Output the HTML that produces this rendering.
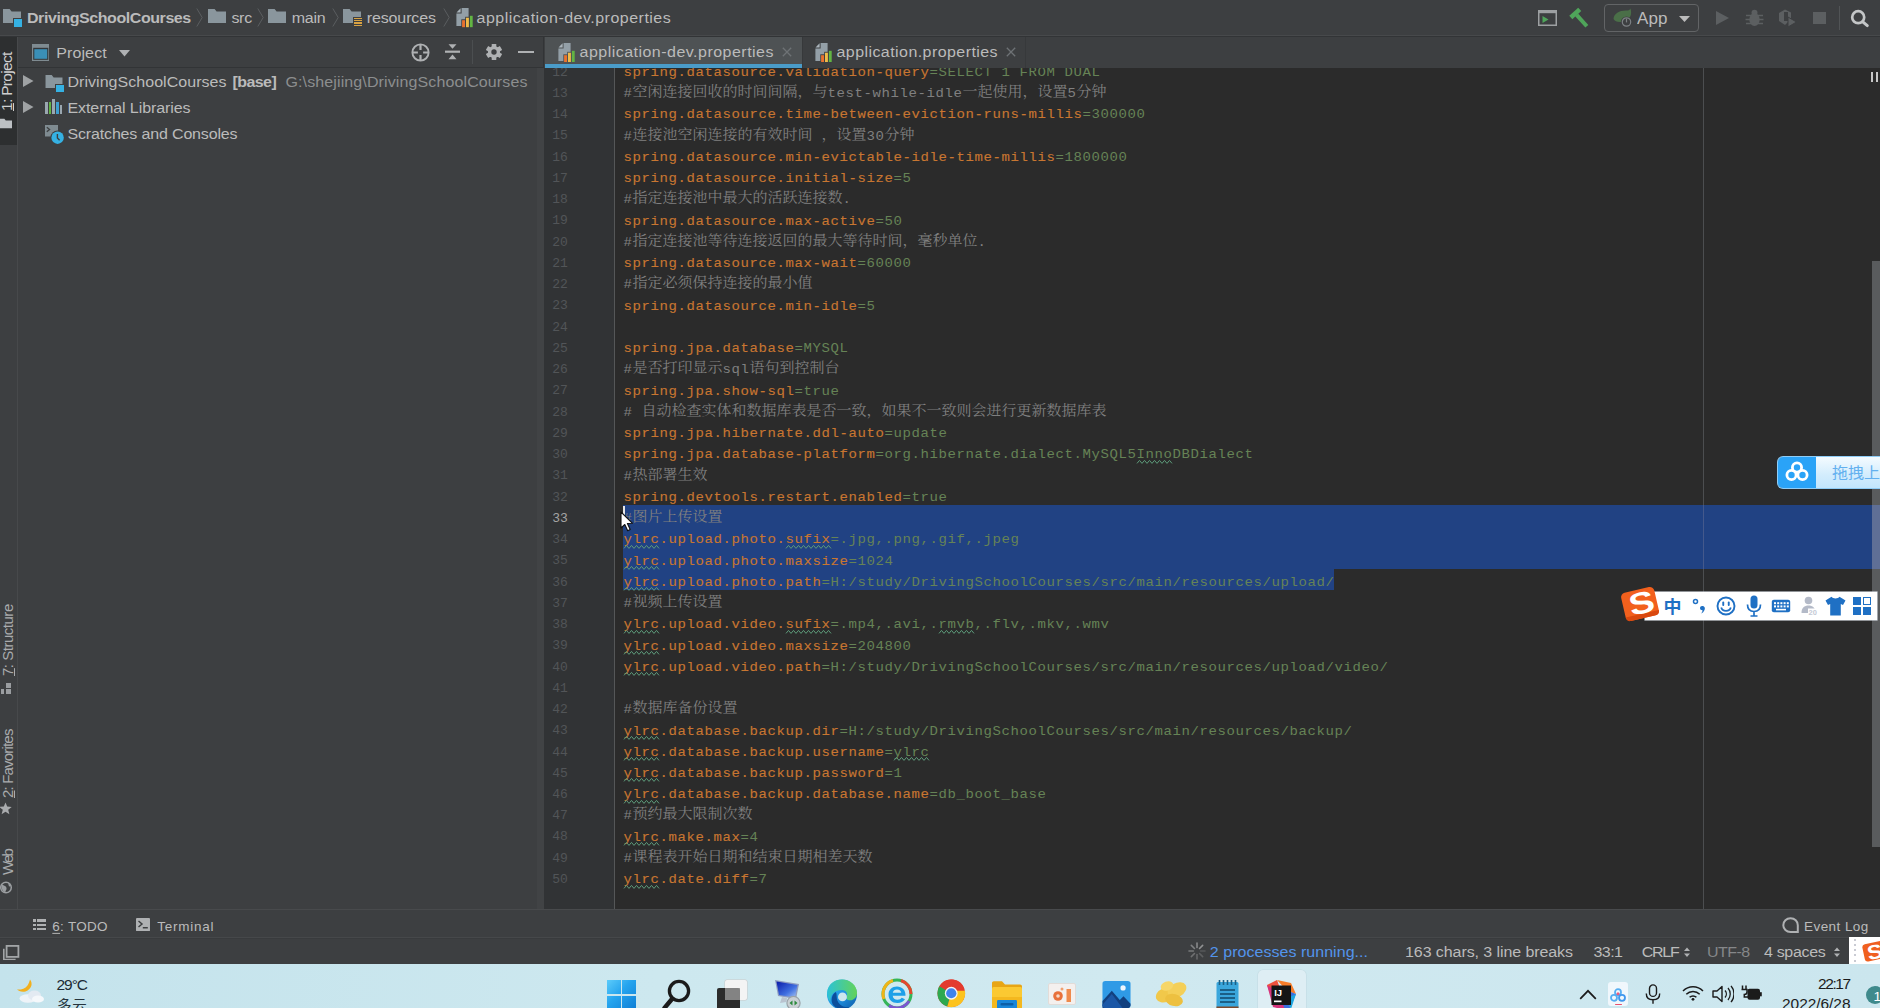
<!DOCTYPE html>
<html lang="zh"><head><meta charset="utf-8"><title>DrivingSchoolCourses</title><style>
html,body{margin:0;padding:0;background:#3d3f41;overflow:hidden}
#root{position:relative;width:1880px;height:1008px;overflow:hidden;background:#3d3f41}
.t{position:absolute;white-space:pre;display:block}
.r{position:absolute;display:block}
.k{color:#c87631;-webkit-text-stroke:.12px #c87631}
.v{color:#668356}
.c{color:#808080}
.z{font-size:15px;letter-spacing:0;line-height:0;position:relative;top:-0.8px}

</style></head><body><div id="root">
<div class="r" style="left:0px;top:0px;width:1880px;height:36px;background:#3d3f41;"></div>
<div class="r" style="left:0px;top:35px;width:1880px;height:1px;background:#47494b;"></div>
<div class="r" style="left:0px;top:36px;width:1880px;height:1.3px;background:#323436;"></div>
<svg class="r" style="left:3px;top:8.5px;" width="18" height="14" viewBox="0 0 18 14"><path d="M0,0 H6.6 L8.6,2.6 H18 V14 H0 Z" fill="#8a969d"/></svg>
<div class="r" style="left:13px;top:18px;width:9.5px;height:9.5px;background:#3d3f41;"></div>
<div class="r" style="left:14.2px;top:19.2px;width:8px;height:8px;background:#35b1e3;"></div>
<span id="t1" class="t" style="left:27.00px;top:9.66px;font:bold 16px/16px 'Liberation Sans','Noto Sans CJK SC',sans-serif;color:#bbbbbb;letter-spacing:-0.435px;transform:scaleY(0.930);transform-origin:0 13.54px;">DrivingSchoolCourses</span>
<svg class="r" style="left:196px;top:8px;" width="7" height="19" viewBox="0 0 7 19"><path d="M0.8,0.5 L6.2,9.5 L0.8,18.5" fill="none" stroke="#5b5e60" stroke-width="1"/></svg>
<svg class="r" style="left:208px;top:9.3px;" width="18" height="14" viewBox="0 0 18 14"><path d="M0,0 H6.6 L8.6,2.6 H18 V14 H0 Z" fill="#8a969d"/></svg>
<span id="t2" class="t" style="left:231.40px;top:9.66px;font:normal 16px/16px 'Liberation Sans','Noto Sans CJK SC',sans-serif;color:#bbbbbb;letter-spacing:-0.291px;transform:scaleY(0.930);transform-origin:0 13.54px;">src</span>
<svg class="r" style="left:257.4px;top:8px;" width="7" height="19" viewBox="0 0 7 19"><path d="M0.8,0.5 L6.2,9.5 L0.8,18.5" fill="none" stroke="#5b5e60" stroke-width="1"/></svg>
<svg class="r" style="left:268px;top:9.3px;" width="18" height="14" viewBox="0 0 18 14"><path d="M0,0 H6.6 L8.6,2.6 H18 V14 H0 Z" fill="#8a969d"/></svg>
<span id="t3" class="t" style="left:291.70px;top:9.66px;font:normal 16px/16px 'Liberation Sans','Noto Sans CJK SC',sans-serif;color:#bbbbbb;letter-spacing:-0.254px;transform:scaleY(0.930);transform-origin:0 13.54px;">main</span>
<svg class="r" style="left:331.6px;top:8px;" width="7" height="19" viewBox="0 0 7 19"><path d="M0.8,0.5 L6.2,9.5 L0.8,18.5" fill="none" stroke="#5b5e60" stroke-width="1"/></svg>
<svg class="r" style="left:342.8px;top:9.3px;" width="18" height="14" viewBox="0 0 18 14"><path d="M0,0 H6.6 L8.6,2.6 H18 V14 H0 Z" fill="#8a969d"/></svg>
<div class="r" style="left:353px;top:16.5px;width:9.5px;height:10.5px;background:#3d3f41;"></div>
<div class="r" style="left:354.2px;top:17.6px;width:8px;height:1.3px;background:#d9a343;"></div>
<div class="r" style="left:354.2px;top:20px;width:8px;height:1.3px;background:#d9a343;"></div>
<div class="r" style="left:354.2px;top:22.4px;width:8px;height:1.3px;background:#d9a343;"></div>
<div class="r" style="left:354.2px;top:24.8px;width:8px;height:1.3px;background:#d9a343;"></div>
<span id="t4" class="t" style="left:366.70px;top:9.66px;font:normal 16px/16px 'Liberation Sans','Noto Sans CJK SC',sans-serif;color:#bbbbbb;letter-spacing:-0.112px;transform:scaleY(0.930);transform-origin:0 13.54px;">resources</span>
<svg class="r" style="left:442.5px;top:8px;" width="7" height="19" viewBox="0 0 7 19"><path d="M0.8,0.5 L6.2,9.5 L0.8,18.5" fill="none" stroke="#5b5e60" stroke-width="1"/></svg>
<svg class="r" style="left:455.5px;top:8px;" width="17" height="19.5" viewBox="0 0 17 19.5"><path d="M5.6,0 H12.6 V18 H0.4 V5.4 H5.6 Z" fill="#939fa7"/><path d="M4.6,0.3 V4.4 H0.5 Z" fill="#aab4bb"/><rect x="5.3" y="11.3" width="12" height="8.2" fill="#3d3f41"/><rect x="9.2" y="8.8" width="8" height="4" fill="#3d3f41"/><rect x="13.2" y="7" width="3.9" height="4" fill="#3d3f41"/><rect x="6.1" y="12.2" width="2.9" height="7" fill="#e8722f"/><rect x="10" y="9.7" width="2.9" height="9.500" fill="#f0bb4a"/><rect x="13.9" y="7.8" width="2.8" height="11.400" fill="#62b543"/></svg>
<span id="t5" class="t" style="left:476.50px;top:9.66px;font:normal 16px/16px 'Liberation Sans','Noto Sans CJK SC',sans-serif;color:#bbbbbb;letter-spacing:0.489px;transform:scaleY(0.930);transform-origin:0 13.54px;">application-dev.properties</span>
<svg class="r" style="left:1537.5px;top:9.5px;" width="19" height="16" viewBox="0 0 19 16"><rect x="0.75" y="0.75" width="17.5" height="14.5" fill="none" stroke="#9da0a2" stroke-width="1.5"/><rect x="0" y="0" width="19" height="3.2" fill="#9da0a2"/><path d="M4.5,6 L10.5,9.5 L4.5,13 Z" fill="#4fa55a"/></svg>
<svg class="r" style="left:1567px;top:6px;" width="24" height="22" viewBox="0 0 24 22"><g transform="translate(9.6,8.9) rotate(-42)"><rect x="-6" y="-4.3" width="12" height="4.6" fill="#4fa55a"/><rect x="-2" y="0" width="4" height="15.3" fill="#4fa55a"/></g></svg>
<div class="r" style="left:1604px;top:4px;width:92.5px;height:26px;border:1px solid #626466;border-radius:4px"></div>
<svg class="r" style="left:1612px;top:8px;" width="22" height="20" viewBox="0 0 22 20"><path d="M1.5,11 C2,5 8,2 15.5,2.5 C17.5,2.6 18,0.8 18.4,0.4 C20.5,6 18,12 12,13.5 C7,14.6 3,14 1.5,11 Z" fill="#4a6f48"/><circle cx="14.5" cy="14" r="5.6" fill="#3d3f41"/><circle cx="14.5" cy="14" r="4.2" fill="none" stroke="#7d8184" stroke-width="1.2"/><rect x="13.9" y="10.6" width="1.2" height="3.8" fill="#7d8184"/></svg>
<span id="t6" class="t" style="left:1637.00px;top:10.11px;font:normal 17px/17px 'Liberation Sans','Noto Sans CJK SC',sans-serif;color:#bbbbbb;letter-spacing:0.095px;transform:scaleY(0.930);transform-origin:0 14.39px;">App</span>
<svg class="r" style="left:1678.5px;top:15.5px;" width="11" height="6" viewBox="0 0 11 6"><path d="M0,0 H11 L5.5,6 Z" fill="#bbbbbb"/></svg>
<svg class="r" style="left:1715.5px;top:11px;" width="13" height="14" viewBox="0 0 13 14"><path d="M0,0 L13,7 L0,14 Z" fill="#5c5f61"/></svg>
<svg class="r" style="left:1745px;top:9px;" width="19" height="18" viewBox="0 0 19 18"><ellipse cx="9.5" cy="10.5" rx="5.2" ry="6.5" fill="#5c5f61"/><circle cx="9.5" cy="3.8" r="3" fill="#5c5f61"/><g stroke="#5c5f61" stroke-width="1.6"><path d="M1,6.5 H18 M0.5,10.5 H18.5 M1,14.5 H18"/></g></svg>
<svg class="r" style="left:1777px;top:9px;" width="20" height="18" viewBox="0 0 20 18"><path d="M8,0.5 L14,3.5 V10 L8,16 L2,12 V4 Z" fill="#5c5f61"/><path d="M7,3 h4 v9 h-4z" fill="#3d3f41"/><path d="M11,8 L19.5,13 L11,18 Z" fill="#5c5f61" stroke="#3d3f41" stroke-width="1"/></svg>
<div class="r" style="left:1812.5px;top:12.3px;width:13px;height:12px;background:#5c5f61;"></div>
<div class="r" style="left:1839px;top:6px;width:1px;height:24px;background:#515456;"></div>
<svg class="r" style="left:1850px;top:9px;" width="21" height="20" viewBox="0 0 21 20"><circle cx="8.2" cy="8.2" r="6" fill="none" stroke="#c4c6c7" stroke-width="2.7"/><path d="M12.8,12.8 L17.3,16.6" stroke="#c4c6c7" stroke-width="3" stroke-linecap="round"/></svg>
<div class="r" style="left:0px;top:37px;width:17px;height:872px;background:#3d3f41;"></div>
<div class="r" style="left:17px;top:37.3px;width:1px;height:872px;background:#47494b;"></div>
<div class="r" style="left:0px;top:37px;width:17px;height:107.5px;background:#2d2f30;"></div>
<span class="t" style="left:6.5px;top:110.5px;width:0;height:0;transform:rotate(-90deg);transform-origin:0 0"><span id="t7" class="t" style="left:0;top:-7.75px;font:15.5px/15.5px 'Liberation Sans','Noto Sans CJK SC',sans-serif;color:#d0d0d0;letter-spacing:-0.683px"><u style="text-underline-offset:1px">1</u>: Project</span></span>
<svg class="r" style="left:-0.5px;top:118px;" width="12" height="11" viewBox="0 0 18 14"><path d="M0,0 H6.6 L8.6,2.6 H18 V14 H0 Z" fill="#bcc0c3"/></svg>
<span class="t" style="left:6.6px;top:675.5px;width:0;height:0;transform:rotate(-90deg);transform-origin:0 0"><span id="t8" class="t" style="left:0;top:-7.5px;font:15px/15px 'Liberation Sans','Noto Sans CJK SC',sans-serif;color:#a9abad;letter-spacing:-0.483px"><u style="text-underline-offset:1px">7</u>: Structure</span></span>
<div class="r" style="left:0.5px;top:689px;width:3.5px;height:5px;background:#9a9da0;"></div>
<div class="r" style="left:5.5px;top:689px;width:5px;height:5px;background:#9a9da0;"></div>
<div class="r" style="left:5.5px;top:683px;width:5px;height:5px;background:#9a9da0;"></div>
<span class="t" style="left:6.6px;top:798px;width:0;height:0;transform:rotate(-90deg);transform-origin:0 0"><span id="t9" class="t" style="left:0;top:-7.5px;font:15px/15px 'Liberation Sans','Noto Sans CJK SC',sans-serif;color:#a9abad;letter-spacing:-0.815px"><u style="text-underline-offset:1px">2</u>: Favorites</span></span>
<svg class="r" style="left:0px;top:802px;" width="12" height="13" viewBox="0 0 12 13"><path d="M5.5,0.5 L7.2,4.6 L11.7,4.9 L8.2,7.8 L9.4,12.2 L5.5,9.8 L1.6,12.2 L2.8,7.8 L-0.7,4.9 L3.8,4.6 Z" fill="#a9abad"/></svg>
<span class="t" style="left:6.6px;top:874.5px;width:0;height:0;transform:rotate(-90deg);transform-origin:0 0"><span id="t10" class="t" style="left:0;top:-7.5px;font:15px/15px 'Liberation Sans','Noto Sans CJK SC',sans-serif;color:#a9abad;letter-spacing:-1.831px">Web</span></span>
<svg class="r" style="left:0px;top:881px;" width="13" height="13" viewBox="0 0 13 13"><circle cx="6" cy="6.5" r="5.3" fill="none" stroke="#9a9da0" stroke-width="1.5"/><path d="M2,3.5 C4,5 6,4.5 6.5,7 C7,9 5,9.5 5.5,11.5 L3.5,10.5 C1.5,8.5 1,5.5 2,3.5 Z M8,1.8 C9,3 10.5,3 11,5 L9,5.5 Z" fill="#9a9da0"/></svg>
<div class="r" style="left:18px;top:37px;width:525px;height:872px;background:#3d3f41;"></div>
<div class="r" style="left:18px;top:67px;width:525px;height:1px;background:#323436;"></div>
<div class="r" style="left:537px;top:68px;width:6.5px;height:841px;background:#414345;"></div>
<svg class="r" style="left:31.5px;top:44px;" width="17.5" height="17" viewBox="0 0 17.5 17"><rect x="0.6" y="0.6" width="16.3" height="15.8" fill="#33373a" stroke="#7f8b91" stroke-width="1.2"/><rect x="0" y="0" width="17.5" height="3.8" fill="#7f8b91"/><rect x="2.3" y="5.2" width="12.9" height="9.6" fill="#3a8fb7"/></svg>
<span id="t11" class="t" style="left:56.20px;top:44.96px;font:normal 16px/16px 'Liberation Sans','Noto Sans CJK SC',sans-serif;color:#bbbbbb;letter-spacing:0.121px;transform:scaleY(0.930);transform-origin:0 13.54px;">Project</span>
<svg class="r" style="left:118.7px;top:50px;" width="11" height="6.5" viewBox="0 0 11 6.5"><path d="M0,0 H11 L5.5,6.5 Z" fill="#afb1b3"/></svg>
<svg class="r" style="left:410.5px;top:42.5px;" width="19" height="19" viewBox="0 0 19 19"><circle cx="9.5" cy="9.5" r="8.1" fill="none" stroke="#afb1b3" stroke-width="1.9"/><path d="M9.5,1.4 V6.9 M9.5,12.1 V17.600 M1.4,9.5 H6.9 M12.1,9.5 H17.600" stroke="#afb1b3" stroke-width="2.2"/></svg>
<svg class="r" style="left:443.5px;top:43.3px;" width="17" height="17.4" viewBox="0 0 17 17.4"><path d="M1,8.7 H16" stroke="#afb1b3" stroke-width="2.2"/><path d="M4.5,1.2 H12.5 L8.5,5.800 Z M4.5,16.2 H12.5 L8.5,11.600 Z" fill="#afb1b3"/></svg>
<div class="r" style="left:471.8px;top:40px;width:1px;height:24px;background:#4b4e50;"></div>
<svg class="r" style="left:484.7px;top:43px;" width="18" height="18" viewBox="0 0 18 18"><g fill="#afb1b3"><circle cx="9" cy="9" r="6.1"/><rect x="6.7" y="0.9" width="4.6" height="16.2" rx="0.5"/><rect x="6.7" y="0.9" width="4.6" height="16.2" rx="0.5" transform="rotate(60 9 9)"/><rect x="6.7" y="0.9" width="4.6" height="16.2" rx="0.5" transform="rotate(120 9 9)"/></g><circle cx="9" cy="9" r="2.7" fill="#3d3f41"/></svg>
<div class="r" style="left:518.3px;top:50.8px;width:15.5px;height:2.4px;background:#afb1b3;"></div>
<svg class="r" style="left:23px;top:75px;" width="11" height="12" viewBox="0 0 11 12"><path d="M0,0 L10.5,6 L0,12 Z" fill="#9fa2a4"/></svg>
<svg class="r" style="left:45px;top:74.6px;" width="18" height="13.2" viewBox="0 0 18 14"><path d="M0,0 H6.6 L8.6,2.6 H18 V14 H0 Z" fill="#8a969d"/></svg>
<div class="r" style="left:55.2px;top:83.5px;width:9.6px;height:9.2px;background:#3d3f41;"></div>
<div class="r" style="left:56.2px;top:84.5px;width:7.6px;height:7.2px;background:#35b1e3;"></div>
<span id="t12" class="t" style="left:67.50px;top:73.96px;font:normal 16px/16px 'Liberation Sans','Noto Sans CJK SC',sans-serif;color:#bbbbbb;letter-spacing:0.036px;transform:scaleY(0.930);transform-origin:0 13.54px;">DrivingSchoolCourses</span>
<span id="t13" class="t" style="left:232.50px;top:73.96px;font:bold 16px/16px 'Liberation Sans','Noto Sans CJK SC',sans-serif;color:#bbbbbb;letter-spacing:-0.571px;transform:scaleY(0.930);transform-origin:0 13.54px;">[base]</span>
<span id="t14" class="t" style="left:285.50px;top:73.96px;font:normal 16px/16px 'Liberation Sans','Noto Sans CJK SC',sans-serif;color:#8c8e8f;letter-spacing:0.116px;transform:scaleY(0.930);transform-origin:0 13.54px;">G:\shejiing\DrivingSchoolCourses</span>
<svg class="r" style="left:23px;top:101px;" width="11" height="12" viewBox="0 0 11 12"><path d="M0,0 L10.5,6 L0,12 Z" fill="#9fa2a4"/></svg>
<div class="r" style="left:45px;top:102.3px;width:2.8px;height:12px;background:#9aa7b0;"></div>
<div class="r" style="left:48.65px;top:102.3px;width:2.8px;height:12px;background:#62b543;"></div>
<div class="r" style="left:52.3px;top:99.3px;width:2.8px;height:15px;background:#9aa7b0;"></div>
<div class="r" style="left:55.95px;top:102.3px;width:2.8px;height:12px;background:#3d9fd0;"></div>
<div class="r" style="left:59.6px;top:104.8px;width:2.8px;height:9.5px;background:#9aa7b0;"></div>
<span id="t15" class="t" style="left:67.50px;top:99.96px;font:normal 16px/16px 'Liberation Sans','Noto Sans CJK SC',sans-serif;color:#bbbbbb;letter-spacing:-0.086px;transform:scaleY(0.930);transform-origin:0 13.54px;">External Libraries</span>
<svg class="r" style="left:45px;top:125px;" width="20" height="21" viewBox="0 0 20 21"><path d="M0,0 H13 V11.5 H0 Z" fill="#7f8b91"/><path d="M1.8,2.2 L4.6,4.5 L1.8,6.8" fill="none" stroke="#3d3f41" stroke-width="1.3"/><circle cx="12.6" cy="12.700" r="7.200" fill="#3d3f41"/><circle cx="12.6" cy="12.700" r="6.200" fill="#35b1e3"/><path d="M12.400,9 V13 L14.600,15.200" fill="none" stroke="#3d3f41" stroke-width="1.4"/></svg>
<span id="t16" class="t" style="left:67.50px;top:125.96px;font:normal 16px/16px 'Liberation Sans','Noto Sans CJK SC',sans-serif;color:#bbbbbb;letter-spacing:-0.160px;transform:scaleY(0.930);transform-origin:0 13.54px;">Scratches and Consoles</span>
<div class="r" style="left:543.5px;top:37px;width:1337px;height:31px;background:#3d3f41;"></div>
<div class="r" style="left:543.5px;top:67.5px;width:1337px;height:1px;background:#323436;"></div>
<div class="r" style="left:543px;top:37px;width:1px;height:31px;background:#323436;"></div>
<div class="r" style="left:545px;top:37px;width:256.5px;height:27px;background:#4e5254;"></div>
<div class="r" style="left:545px;top:63.7px;width:256.5px;height:4.3px;background:#4a9cc9;"></div>
<div class="r" style="left:801.5px;top:37px;width:1px;height:31px;background:#37393b;"></div>
<div class="r" style="left:1024.5px;top:37px;width:1px;height:31px;background:#37393b;"></div>
<svg class="r" style="left:558px;top:42.5px;" width="17" height="19.5" viewBox="0 0 17 19.5"><path d="M5.6,0 H12.6 V18 H0.4 V5.4 H5.6 Z" fill="#939fa7"/><path d="M4.6,0.3 V4.4 H0.5 Z" fill="#aab4bb"/><rect x="5.3" y="11.3" width="12" height="8.2" fill="#4e5254"/><rect x="9.2" y="8.8" width="8" height="4" fill="#4e5254"/><rect x="13.2" y="7" width="3.9" height="4" fill="#4e5254"/><rect x="6.1" y="12.2" width="2.9" height="7" fill="#e8722f"/><rect x="10" y="9.7" width="2.9" height="9.500" fill="#f0bb4a"/><rect x="13.9" y="7.8" width="2.8" height="11.400" fill="#62b543"/></svg>
<span id="t17" class="t" style="left:579.50px;top:44.46px;font:normal 16px/16px 'Liberation Sans','Noto Sans CJK SC',sans-serif;color:#bbbbbb;letter-spacing:0.477px;transform:scaleY(0.930);transform-origin:0 13.54px;">application-dev.properties</span>
<svg class="r" style="left:781.5px;top:47px;" width="10" height="10" viewBox="0 0 10 10"><path d="M0.8,0.8 L9.2,9.2 M9.2,0.8 L0.8,9.2" stroke="#6e7275" stroke-width="1.3"/></svg>
<svg class="r" style="left:815px;top:42.5px;" width="17" height="19.5" viewBox="0 0 17 19.5"><path d="M5.6,0 H12.6 V18 H0.4 V5.4 H5.6 Z" fill="#939fa7"/><path d="M4.6,0.3 V4.4 H0.5 Z" fill="#aab4bb"/><rect x="5.3" y="11.3" width="12" height="8.2" fill="#3d3f41"/><rect x="9.2" y="8.8" width="8" height="4" fill="#3d3f41"/><rect x="13.2" y="7" width="3.9" height="4" fill="#3d3f41"/><rect x="6.1" y="12.2" width="2.9" height="7" fill="#e8722f"/><rect x="10" y="9.7" width="2.9" height="9.500" fill="#f0bb4a"/><rect x="13.9" y="7.8" width="2.8" height="11.400" fill="#62b543"/></svg>
<span id="t18" class="t" style="left:836.50px;top:44.46px;font:normal 16px/16px 'Liberation Sans','Noto Sans CJK SC',sans-serif;color:#bbbbbb;letter-spacing:0.428px;transform:scaleY(0.930);transform-origin:0 13.54px;">application.properties</span>
<svg class="r" style="left:1005.5px;top:47px;" width="10" height="10" viewBox="0 0 10 10"><path d="M0.8,0.8 L9.2,9.2 M9.2,0.8 L0.8,9.2" stroke="#6e7275" stroke-width="1.3"/></svg>
<div class="r" style="left:545px;top:68px;width:1335px;height:841px;background:#2b2b2b;"></div>
<div class="r" style="left:543.5px;top:68px;width:70.5px;height:841px;background:#313335;"></div>
<div class="r" style="left:614px;top:68px;width:1px;height:841px;background:#555758;"></div>
<div class="r" style="left:1703px;top:68px;width:1px;height:841px;background:#4c4e50;"></div>
<div class="r" style="left:623px;top:505.3px;width:1257px;height:64.029px;background:#214283;"></div>
<div class="r" style="left:623px;top:569.029px;width:711px;height:21.243px;background:#214283;"></div>
<div class="r" style="left:1703px;top:505.3px;width:1px;height:63.729px;background:#44598c;"></div>
<div class="r" style="left:1872px;top:261px;width:8px;height:586px;background:#595b5d;"></div>
<div class="r" style="left:1872px;top:505.3px;width:8px;height:63.729px;background:#5f6f96;"></div>
<div class="r" style="left:1871.3px;top:71.5px;width:2.2px;height:10px;background:#c8c8c8;"></div>
<div class="r" style="left:1875.6px;top:71.5px;width:2.2px;height:10px;background:#c8c8c8;"></div>
<div class="r" style="left:545px;top:68px;width:1335px;height:841px;overflow:hidden">
<span id="t19" class="t" style="left:7.30px;top:-2.27px;font:normal 13px/13px 'Liberation Mono','Noto Serif CJK SC',monospace;color:#525558;letter-spacing:0.000px;transform:scaleY(0.920);transform-origin:0 9.96px;">12</span>
<span id="t20" class="t" style="left:78.40px;top:-3.03px;font:normal 14px/14px 'Liberation Mono','Noto Serif CJK SC',monospace;color:#a9b7c6;letter-spacing:0.000px;transform:scaleY(0.900);transform-origin:0 10.73px;letter-spacing:0.6px;"><span class="k">spring.datasource.validation-query</span><span class="v">=SELECT 1 FROM DUAL</span></span>
<span id="t21" class="t" style="left:7.30px;top:18.98px;font:normal 13px/13px 'Liberation Mono','Noto Serif CJK SC',monospace;color:#525558;letter-spacing:0.000px;transform:scaleY(0.920);transform-origin:0 9.96px;">13</span>
<span id="t22" class="t" style="left:78.40px;top:18.21px;font:normal 14px/14px 'Liberation Mono','Noto Serif CJK SC',monospace;color:#a9b7c6;letter-spacing:0.000px;transform:scaleY(0.900);transform-origin:0 10.73px;letter-spacing:0.6px;"><span class="c">#<span class="z">空闲连接回收的时间间隔，与</span>test-while-idle<span class="z">一起使用，设置</span>5<span class="z">分钟</span></span></span>
<span id="t23" class="t" style="left:7.30px;top:40.22px;font:normal 13px/13px 'Liberation Mono','Noto Serif CJK SC',monospace;color:#525558;letter-spacing:0.000px;transform:scaleY(0.920);transform-origin:0 9.96px;">14</span>
<span id="t24" class="t" style="left:78.40px;top:39.45px;font:normal 14px/14px 'Liberation Mono','Noto Serif CJK SC',monospace;color:#a9b7c6;letter-spacing:0.000px;transform:scaleY(0.900);transform-origin:0 10.73px;letter-spacing:0.6px;"><span class="k">spring.datasource.time-between-eviction-runs-millis</span><span class="v">=300000</span></span>
<span id="t25" class="t" style="left:7.30px;top:61.46px;font:normal 13px/13px 'Liberation Mono','Noto Serif CJK SC',monospace;color:#525558;letter-spacing:0.000px;transform:scaleY(0.920);transform-origin:0 9.96px;">15</span>
<span id="t26" class="t" style="left:78.40px;top:60.70px;font:normal 14px/14px 'Liberation Mono','Noto Serif CJK SC',monospace;color:#a9b7c6;letter-spacing:0.000px;transform:scaleY(0.900);transform-origin:0 10.73px;letter-spacing:0.6px;"><span class="c">#<span class="z">连接池空闲连接的有效时间</span> <span class="z">，设置</span>30<span class="z">分钟</span></span></span>
<span id="t27" class="t" style="left:7.30px;top:82.70px;font:normal 13px/13px 'Liberation Mono','Noto Serif CJK SC',monospace;color:#525558;letter-spacing:0.000px;transform:scaleY(0.920);transform-origin:0 9.96px;">16</span>
<span id="t28" class="t" style="left:78.40px;top:81.94px;font:normal 14px/14px 'Liberation Mono','Noto Serif CJK SC',monospace;color:#a9b7c6;letter-spacing:0.000px;transform:scaleY(0.900);transform-origin:0 10.73px;letter-spacing:0.6px;"><span class="k">spring.datasource.min-evictable-idle-time-millis</span><span class="v">=1800000</span></span>
<span id="t29" class="t" style="left:7.30px;top:103.95px;font:normal 13px/13px 'Liberation Mono','Noto Serif CJK SC',monospace;color:#525558;letter-spacing:0.000px;transform:scaleY(0.920);transform-origin:0 9.96px;">17</span>
<span id="t30" class="t" style="left:78.40px;top:103.18px;font:normal 14px/14px 'Liberation Mono','Noto Serif CJK SC',monospace;color:#a9b7c6;letter-spacing:0.000px;transform:scaleY(0.900);transform-origin:0 10.73px;letter-spacing:0.6px;"><span class="k">spring.datasource.initial-size</span><span class="v">=5</span></span>
<span id="t31" class="t" style="left:7.30px;top:125.19px;font:normal 13px/13px 'Liberation Mono','Noto Serif CJK SC',monospace;color:#525558;letter-spacing:0.000px;transform:scaleY(0.920);transform-origin:0 9.96px;">18</span>
<span id="t32" class="t" style="left:78.40px;top:124.42px;font:normal 14px/14px 'Liberation Mono','Noto Serif CJK SC',monospace;color:#a9b7c6;letter-spacing:0.000px;transform:scaleY(0.900);transform-origin:0 10.73px;letter-spacing:0.6px;"><span class="c">#<span class="z">指定连接池中最大的活跃连接数</span>.</span></span>
<span id="t33" class="t" style="left:7.30px;top:146.43px;font:normal 13px/13px 'Liberation Mono','Noto Serif CJK SC',monospace;color:#525558;letter-spacing:0.000px;transform:scaleY(0.920);transform-origin:0 9.96px;">19</span>
<span id="t34" class="t" style="left:78.40px;top:145.67px;font:normal 14px/14px 'Liberation Mono','Noto Serif CJK SC',monospace;color:#a9b7c6;letter-spacing:0.000px;transform:scaleY(0.900);transform-origin:0 10.73px;letter-spacing:0.6px;"><span class="k">spring.datasource.max-active</span><span class="v">=50</span></span>
<span id="t35" class="t" style="left:7.30px;top:167.68px;font:normal 13px/13px 'Liberation Mono','Noto Serif CJK SC',monospace;color:#525558;letter-spacing:0.000px;transform:scaleY(0.920);transform-origin:0 9.96px;">20</span>
<span id="t36" class="t" style="left:78.40px;top:166.91px;font:normal 14px/14px 'Liberation Mono','Noto Serif CJK SC',monospace;color:#a9b7c6;letter-spacing:0.000px;transform:scaleY(0.900);transform-origin:0 10.73px;letter-spacing:0.6px;"><span class="c">#<span class="z">指定连接池等待连接返回的最大等待时间，毫秒单位</span>.</span></span>
<span id="t37" class="t" style="left:7.30px;top:188.92px;font:normal 13px/13px 'Liberation Mono','Noto Serif CJK SC',monospace;color:#525558;letter-spacing:0.000px;transform:scaleY(0.920);transform-origin:0 9.96px;">21</span>
<span id="t38" class="t" style="left:78.40px;top:188.15px;font:normal 14px/14px 'Liberation Mono','Noto Serif CJK SC',monospace;color:#a9b7c6;letter-spacing:0.000px;transform:scaleY(0.900);transform-origin:0 10.73px;letter-spacing:0.6px;"><span class="k">spring.datasource.max-wait</span><span class="v">=60000</span></span>
<span id="t39" class="t" style="left:7.30px;top:210.16px;font:normal 13px/13px 'Liberation Mono','Noto Serif CJK SC',monospace;color:#525558;letter-spacing:0.000px;transform:scaleY(0.920);transform-origin:0 9.96px;">22</span>
<span id="t40" class="t" style="left:78.40px;top:209.40px;font:normal 14px/14px 'Liberation Mono','Noto Serif CJK SC',monospace;color:#a9b7c6;letter-spacing:0.000px;transform:scaleY(0.900);transform-origin:0 10.73px;letter-spacing:0.6px;"><span class="c">#<span class="z">指定必须保持连接的最小值</span></span></span>
<span id="t41" class="t" style="left:7.30px;top:231.41px;font:normal 13px/13px 'Liberation Mono','Noto Serif CJK SC',monospace;color:#525558;letter-spacing:0.000px;transform:scaleY(0.920);transform-origin:0 9.96px;">23</span>
<span id="t42" class="t" style="left:78.40px;top:230.64px;font:normal 14px/14px 'Liberation Mono','Noto Serif CJK SC',monospace;color:#a9b7c6;letter-spacing:0.000px;transform:scaleY(0.900);transform-origin:0 10.73px;letter-spacing:0.6px;"><span class="k">spring.datasource.min-idle</span><span class="v">=5</span></span>
<span id="t43" class="t" style="left:7.30px;top:252.65px;font:normal 13px/13px 'Liberation Mono','Noto Serif CJK SC',monospace;color:#525558;letter-spacing:0.000px;transform:scaleY(0.920);transform-origin:0 9.96px;">24</span>
<span id="t44" class="t" style="left:7.30px;top:273.89px;font:normal 13px/13px 'Liberation Mono','Noto Serif CJK SC',monospace;color:#525558;letter-spacing:0.000px;transform:scaleY(0.920);transform-origin:0 9.96px;">25</span>
<span id="t45" class="t" style="left:78.40px;top:273.12px;font:normal 14px/14px 'Liberation Mono','Noto Serif CJK SC',monospace;color:#a9b7c6;letter-spacing:0.000px;transform:scaleY(0.900);transform-origin:0 10.73px;letter-spacing:0.6px;"><span class="k">spring.jpa.database</span><span class="v">=MYSQL</span></span>
<span id="t46" class="t" style="left:7.30px;top:295.13px;font:normal 13px/13px 'Liberation Mono','Noto Serif CJK SC',monospace;color:#525558;letter-spacing:0.000px;transform:scaleY(0.920);transform-origin:0 9.96px;">26</span>
<span id="t47" class="t" style="left:78.40px;top:294.37px;font:normal 14px/14px 'Liberation Mono','Noto Serif CJK SC',monospace;color:#a9b7c6;letter-spacing:0.000px;transform:scaleY(0.900);transform-origin:0 10.73px;letter-spacing:0.6px;"><span class="c">#<span class="z">是否打印显示</span>sql<span class="z">语句到控制台</span></span></span>
<span id="t48" class="t" style="left:7.30px;top:316.38px;font:normal 13px/13px 'Liberation Mono','Noto Serif CJK SC',monospace;color:#525558;letter-spacing:0.000px;transform:scaleY(0.920);transform-origin:0 9.96px;">27</span>
<span id="t49" class="t" style="left:78.40px;top:315.61px;font:normal 14px/14px 'Liberation Mono','Noto Serif CJK SC',monospace;color:#a9b7c6;letter-spacing:0.000px;transform:scaleY(0.900);transform-origin:0 10.73px;letter-spacing:0.6px;"><span class="k">spring.jpa.show-sql</span><span class="v">=true</span></span>
<span id="t50" class="t" style="left:7.30px;top:337.62px;font:normal 13px/13px 'Liberation Mono','Noto Serif CJK SC',monospace;color:#525558;letter-spacing:0.000px;transform:scaleY(0.920);transform-origin:0 9.96px;">28</span>
<span id="t51" class="t" style="left:78.40px;top:336.85px;font:normal 14px/14px 'Liberation Mono','Noto Serif CJK SC',monospace;color:#a9b7c6;letter-spacing:0.000px;transform:scaleY(0.900);transform-origin:0 10.73px;letter-spacing:0.6px;"><span class="c"># <span class="z">自动检查实体和数据库表是否一致，如果不一致则会进行更新数据库表</span></span></span>
<span id="t52" class="t" style="left:7.30px;top:358.86px;font:normal 13px/13px 'Liberation Mono','Noto Serif CJK SC',monospace;color:#525558;letter-spacing:0.000px;transform:scaleY(0.920);transform-origin:0 9.96px;">29</span>
<span id="t53" class="t" style="left:78.40px;top:358.10px;font:normal 14px/14px 'Liberation Mono','Noto Serif CJK SC',monospace;color:#a9b7c6;letter-spacing:0.000px;transform:scaleY(0.900);transform-origin:0 10.73px;letter-spacing:0.6px;"><span class="k">spring.jpa.hibernate.ddl-auto</span><span class="v">=update</span></span>
<span id="t54" class="t" style="left:7.30px;top:380.11px;font:normal 13px/13px 'Liberation Mono','Noto Serif CJK SC',monospace;color:#525558;letter-spacing:0.000px;transform:scaleY(0.920);transform-origin:0 9.96px;">30</span>
<span id="t55" class="t" style="left:78.40px;top:379.34px;font:normal 14px/14px 'Liberation Mono','Noto Serif CJK SC',monospace;color:#a9b7c6;letter-spacing:0.000px;transform:scaleY(0.900);transform-origin:0 10.73px;letter-spacing:0.6px;"><span class="k">spring.jpa.database-platform</span><span class="v">=org.hibernate.dialect.MySQL5InnoDBDialect</span></span>
<span id="t56" class="t" style="left:7.30px;top:401.35px;font:normal 13px/13px 'Liberation Mono','Noto Serif CJK SC',monospace;color:#525558;letter-spacing:0.000px;transform:scaleY(0.920);transform-origin:0 9.96px;">31</span>
<span id="t57" class="t" style="left:78.40px;top:400.58px;font:normal 14px/14px 'Liberation Mono','Noto Serif CJK SC',monospace;color:#a9b7c6;letter-spacing:0.000px;transform:scaleY(0.900);transform-origin:0 10.73px;letter-spacing:0.6px;"><span class="c">#<span class="z">热部署生效</span></span></span>
<span id="t58" class="t" style="left:7.30px;top:422.59px;font:normal 13px/13px 'Liberation Mono','Noto Serif CJK SC',monospace;color:#525558;letter-spacing:0.000px;transform:scaleY(0.920);transform-origin:0 9.96px;">32</span>
<span id="t59" class="t" style="left:78.40px;top:421.83px;font:normal 14px/14px 'Liberation Mono','Noto Serif CJK SC',monospace;color:#a9b7c6;letter-spacing:0.000px;transform:scaleY(0.900);transform-origin:0 10.73px;letter-spacing:0.6px;"><span class="k">spring.devtools.restart.enabled</span><span class="v">=true</span></span>
<span id="t60" class="t" style="left:7.30px;top:443.84px;font:normal 13px/13px 'Liberation Mono','Noto Serif CJK SC',monospace;color:#a4a3a3;letter-spacing:0.000px;transform:scaleY(0.920);transform-origin:0 9.96px;">33</span>
<span id="t61" class="t" style="left:78.40px;top:443.07px;font:normal 14px/14px 'Liberation Mono','Noto Serif CJK SC',monospace;color:#a9b7c6;letter-spacing:0.000px;transform:scaleY(0.900);transform-origin:0 10.73px;letter-spacing:0.6px;"><span class="c">#<span class="z">图片上传设置</span></span></span>
<span id="t62" class="t" style="left:7.30px;top:465.08px;font:normal 13px/13px 'Liberation Mono','Noto Serif CJK SC',monospace;color:#525558;letter-spacing:0.000px;transform:scaleY(0.920);transform-origin:0 9.96px;">34</span>
<span id="t63" class="t" style="left:78.40px;top:464.31px;font:normal 14px/14px 'Liberation Mono','Noto Serif CJK SC',monospace;color:#a9b7c6;letter-spacing:0.000px;transform:scaleY(0.900);transform-origin:0 10.73px;letter-spacing:0.6px;"><span class="k">ylrc.upload.photo.sufix</span><span class="v">=.jpg,.png,.gif,.jpeg</span></span>
<span id="t64" class="t" style="left:7.30px;top:486.32px;font:normal 13px/13px 'Liberation Mono','Noto Serif CJK SC',monospace;color:#525558;letter-spacing:0.000px;transform:scaleY(0.920);transform-origin:0 9.96px;">35</span>
<span id="t65" class="t" style="left:78.40px;top:485.56px;font:normal 14px/14px 'Liberation Mono','Noto Serif CJK SC',monospace;color:#a9b7c6;letter-spacing:0.000px;transform:scaleY(0.900);transform-origin:0 10.73px;letter-spacing:0.6px;"><span class="k">ylrc.upload.photo.maxsize</span><span class="v">=1024</span></span>
<span id="t66" class="t" style="left:7.30px;top:507.56px;font:normal 13px/13px 'Liberation Mono','Noto Serif CJK SC',monospace;color:#525558;letter-spacing:0.000px;transform:scaleY(0.920);transform-origin:0 9.96px;">36</span>
<span id="t67" class="t" style="left:78.40px;top:506.80px;font:normal 14px/14px 'Liberation Mono','Noto Serif CJK SC',monospace;color:#a9b7c6;letter-spacing:0.000px;transform:scaleY(0.900);transform-origin:0 10.73px;letter-spacing:0.6px;"><span class="k">ylrc.upload.photo.path</span><span class="v">=H:/study/DrivingSchoolCourses/src/main/resources/upload/</span></span>
<span id="t68" class="t" style="left:7.30px;top:528.81px;font:normal 13px/13px 'Liberation Mono','Noto Serif CJK SC',monospace;color:#525558;letter-spacing:0.000px;transform:scaleY(0.920);transform-origin:0 9.96px;">37</span>
<span id="t69" class="t" style="left:78.40px;top:528.04px;font:normal 14px/14px 'Liberation Mono','Noto Serif CJK SC',monospace;color:#a9b7c6;letter-spacing:0.000px;transform:scaleY(0.900);transform-origin:0 10.73px;letter-spacing:0.6px;"><span class="c">#<span class="z">视频上传设置</span></span></span>
<span id="t70" class="t" style="left:7.30px;top:550.05px;font:normal 13px/13px 'Liberation Mono','Noto Serif CJK SC',monospace;color:#525558;letter-spacing:0.000px;transform:scaleY(0.920);transform-origin:0 9.96px;">38</span>
<span id="t71" class="t" style="left:78.40px;top:549.28px;font:normal 14px/14px 'Liberation Mono','Noto Serif CJK SC',monospace;color:#a9b7c6;letter-spacing:0.000px;transform:scaleY(0.900);transform-origin:0 10.73px;letter-spacing:0.6px;"><span class="k">ylrc.upload.video.sufix</span><span class="v">=.mp4,.avi,.rmvb,.flv,.mkv,.wmv</span></span>
<span id="t72" class="t" style="left:7.30px;top:571.29px;font:normal 13px/13px 'Liberation Mono','Noto Serif CJK SC',monospace;color:#525558;letter-spacing:0.000px;transform:scaleY(0.920);transform-origin:0 9.96px;">39</span>
<span id="t73" class="t" style="left:78.40px;top:570.53px;font:normal 14px/14px 'Liberation Mono','Noto Serif CJK SC',monospace;color:#a9b7c6;letter-spacing:0.000px;transform:scaleY(0.900);transform-origin:0 10.73px;letter-spacing:0.6px;"><span class="k">ylrc.upload.video.maxsize</span><span class="v">=204800</span></span>
<span id="t74" class="t" style="left:7.30px;top:592.54px;font:normal 13px/13px 'Liberation Mono','Noto Serif CJK SC',monospace;color:#525558;letter-spacing:0.000px;transform:scaleY(0.920);transform-origin:0 9.96px;">40</span>
<span id="t75" class="t" style="left:78.40px;top:591.77px;font:normal 14px/14px 'Liberation Mono','Noto Serif CJK SC',monospace;color:#a9b7c6;letter-spacing:0.000px;transform:scaleY(0.900);transform-origin:0 10.73px;letter-spacing:0.6px;"><span class="k">ylrc.upload.video.path</span><span class="v">=H:/study/DrivingSchoolCourses/src/main/resources/upload/video/</span></span>
<span id="t76" class="t" style="left:7.30px;top:613.78px;font:normal 13px/13px 'Liberation Mono','Noto Serif CJK SC',monospace;color:#525558;letter-spacing:0.000px;transform:scaleY(0.920);transform-origin:0 9.96px;">41</span>
<span id="t77" class="t" style="left:7.30px;top:635.02px;font:normal 13px/13px 'Liberation Mono','Noto Serif CJK SC',monospace;color:#525558;letter-spacing:0.000px;transform:scaleY(0.920);transform-origin:0 9.96px;">42</span>
<span id="t78" class="t" style="left:78.40px;top:634.26px;font:normal 14px/14px 'Liberation Mono','Noto Serif CJK SC',monospace;color:#a9b7c6;letter-spacing:0.000px;transform:scaleY(0.900);transform-origin:0 10.73px;letter-spacing:0.6px;"><span class="c">#<span class="z">数据库备份设置</span></span></span>
<span id="t79" class="t" style="left:7.30px;top:656.27px;font:normal 13px/13px 'Liberation Mono','Noto Serif CJK SC',monospace;color:#525558;letter-spacing:0.000px;transform:scaleY(0.920);transform-origin:0 9.96px;">43</span>
<span id="t80" class="t" style="left:78.40px;top:655.50px;font:normal 14px/14px 'Liberation Mono','Noto Serif CJK SC',monospace;color:#a9b7c6;letter-spacing:0.000px;transform:scaleY(0.900);transform-origin:0 10.73px;letter-spacing:0.6px;"><span class="k">ylrc.database.backup.dir</span><span class="v">=H:/study/DrivingSchoolCourses/src/main/resources/backup/</span></span>
<span id="t81" class="t" style="left:7.30px;top:677.51px;font:normal 13px/13px 'Liberation Mono','Noto Serif CJK SC',monospace;color:#525558;letter-spacing:0.000px;transform:scaleY(0.920);transform-origin:0 9.96px;">44</span>
<span id="t82" class="t" style="left:78.40px;top:676.74px;font:normal 14px/14px 'Liberation Mono','Noto Serif CJK SC',monospace;color:#a9b7c6;letter-spacing:0.000px;transform:scaleY(0.900);transform-origin:0 10.73px;letter-spacing:0.6px;"><span class="k">ylrc.database.backup.username</span><span class="v">=ylrc</span></span>
<span id="t83" class="t" style="left:7.30px;top:698.75px;font:normal 13px/13px 'Liberation Mono','Noto Serif CJK SC',monospace;color:#525558;letter-spacing:0.000px;transform:scaleY(0.920);transform-origin:0 9.96px;">45</span>
<span id="t84" class="t" style="left:78.40px;top:697.99px;font:normal 14px/14px 'Liberation Mono','Noto Serif CJK SC',monospace;color:#a9b7c6;letter-spacing:0.000px;transform:scaleY(0.900);transform-origin:0 10.73px;letter-spacing:0.6px;"><span class="k">ylrc.database.backup.password</span><span class="v">=1</span></span>
<span id="t85" class="t" style="left:7.30px;top:719.99px;font:normal 13px/13px 'Liberation Mono','Noto Serif CJK SC',monospace;color:#525558;letter-spacing:0.000px;transform:scaleY(0.920);transform-origin:0 9.96px;">46</span>
<span id="t86" class="t" style="left:78.40px;top:719.23px;font:normal 14px/14px 'Liberation Mono','Noto Serif CJK SC',monospace;color:#a9b7c6;letter-spacing:0.000px;transform:scaleY(0.900);transform-origin:0 10.73px;letter-spacing:0.6px;"><span class="k">ylrc.database.backup.database.name</span><span class="v">=db_boot_base</span></span>
<span id="t87" class="t" style="left:7.30px;top:741.24px;font:normal 13px/13px 'Liberation Mono','Noto Serif CJK SC',monospace;color:#525558;letter-spacing:0.000px;transform:scaleY(0.920);transform-origin:0 9.96px;">47</span>
<span id="t88" class="t" style="left:78.40px;top:740.47px;font:normal 14px/14px 'Liberation Mono','Noto Serif CJK SC',monospace;color:#a9b7c6;letter-spacing:0.000px;transform:scaleY(0.900);transform-origin:0 10.73px;letter-spacing:0.6px;"><span class="c">#<span class="z">预约最大限制次数</span></span></span>
<span id="t89" class="t" style="left:7.30px;top:762.48px;font:normal 13px/13px 'Liberation Mono','Noto Serif CJK SC',monospace;color:#525558;letter-spacing:0.000px;transform:scaleY(0.920);transform-origin:0 9.96px;">48</span>
<span id="t90" class="t" style="left:78.40px;top:761.71px;font:normal 14px/14px 'Liberation Mono','Noto Serif CJK SC',monospace;color:#a9b7c6;letter-spacing:0.000px;transform:scaleY(0.900);transform-origin:0 10.73px;letter-spacing:0.6px;"><span class="k">ylrc.make.max</span><span class="v">=4</span></span>
<span id="t91" class="t" style="left:7.30px;top:783.72px;font:normal 13px/13px 'Liberation Mono','Noto Serif CJK SC',monospace;color:#525558;letter-spacing:0.000px;transform:scaleY(0.920);transform-origin:0 9.96px;">49</span>
<span id="t92" class="t" style="left:78.40px;top:782.96px;font:normal 14px/14px 'Liberation Mono','Noto Serif CJK SC',monospace;color:#a9b7c6;letter-spacing:0.000px;transform:scaleY(0.900);transform-origin:0 10.73px;letter-spacing:0.6px;"><span class="c">#<span class="z">课程表开始日期和结束日期相差天数</span></span></span>
<span id="t93" class="t" style="left:7.30px;top:804.97px;font:normal 13px/13px 'Liberation Mono','Noto Serif CJK SC',monospace;color:#525558;letter-spacing:0.000px;transform:scaleY(0.920);transform-origin:0 9.96px;">50</span>
<span id="t94" class="t" style="left:78.40px;top:804.20px;font:normal 14px/14px 'Liberation Mono','Noto Serif CJK SC',monospace;color:#a9b7c6;letter-spacing:0.000px;transform:scaleY(0.900);transform-origin:0 10.73px;letter-spacing:0.6px;"><span class="k">ylrc.date.diff</span><span class="v">=7</span></span>
<svg class="r" style="left:591.5px;top:391.671px;overflow:visible;" width="36" height="4" viewBox="0 0 36 4"><polyline points="0.0,3.4 2.5,0.4 5.0,3.4 7.5,0.4 10.0,3.4 12.5,0.4 15.0,3.4 17.5,0.4 20.0,3.4 22.5,0.4 25.0,3.4 27.5,0.4 30.0,3.4 32.5,0.4 35.0,3.4" fill="none" stroke="#5d9a7a" stroke-width="1"/></svg>
<svg class="r" style="left:78.5px;top:476.643px;overflow:visible;" width="36" height="4" viewBox="0 0 36 4"><polyline points="0.0,3.4 2.5,0.4 5.0,3.4 7.5,0.4 10.0,3.4 12.5,0.4 15.0,3.4 17.5,0.4 20.0,3.4 22.5,0.4 25.0,3.4 27.5,0.4 30.0,3.4 32.5,0.4 35.0,3.4" fill="none" stroke="#5d9a7a" stroke-width="1"/></svg>
<svg class="r" style="left:240.5px;top:476.643px;overflow:visible;" width="45" height="4" viewBox="0 0 45 4"><polyline points="0.0,3.4 2.5,0.4 5.0,3.4 7.5,0.4 10.0,3.4 12.5,0.4 15.0,3.4 17.5,0.4 20.0,3.4 22.5,0.4 25.0,3.4 27.5,0.4 30.0,3.4 32.5,0.4 35.0,3.4 37.5,0.4 40.0,3.4 42.5,0.4 45.0,3.4" fill="none" stroke="#5d9a7a" stroke-width="1"/></svg>
<svg class="r" style="left:78.5px;top:497.886px;overflow:visible;" width="36" height="4" viewBox="0 0 36 4"><polyline points="0.0,3.4 2.5,0.4 5.0,3.4 7.5,0.4 10.0,3.4 12.5,0.4 15.0,3.4 17.5,0.4 20.0,3.4 22.5,0.4 25.0,3.4 27.5,0.4 30.0,3.4 32.5,0.4 35.0,3.4" fill="none" stroke="#5d9a7a" stroke-width="1"/></svg>
<svg class="r" style="left:78.5px;top:519.129px;overflow:visible;" width="36" height="4" viewBox="0 0 36 4"><polyline points="0.0,3.4 2.5,0.4 5.0,3.4 7.5,0.4 10.0,3.4 12.5,0.4 15.0,3.4 17.5,0.4 20.0,3.4 22.5,0.4 25.0,3.4 27.5,0.4 30.0,3.4 32.5,0.4 35.0,3.4" fill="none" stroke="#5d9a7a" stroke-width="1"/></svg>
<svg class="r" style="left:78.5px;top:561.615px;overflow:visible;" width="36" height="4" viewBox="0 0 36 4"><polyline points="0.0,3.4 2.5,0.4 5.0,3.4 7.5,0.4 10.0,3.4 12.5,0.4 15.0,3.4 17.5,0.4 20.0,3.4 22.5,0.4 25.0,3.4 27.5,0.4 30.0,3.4 32.5,0.4 35.0,3.4" fill="none" stroke="#5d9a7a" stroke-width="1"/></svg>
<svg class="r" style="left:240.5px;top:561.615px;overflow:visible;" width="45" height="4" viewBox="0 0 45 4"><polyline points="0.0,3.4 2.5,0.4 5.0,3.4 7.5,0.4 10.0,3.4 12.5,0.4 15.0,3.4 17.5,0.4 20.0,3.4 22.5,0.4 25.0,3.4 27.5,0.4 30.0,3.4 32.5,0.4 35.0,3.4 37.5,0.4 40.0,3.4 42.5,0.4 45.0,3.4" fill="none" stroke="#5d9a7a" stroke-width="1"/></svg>
<svg class="r" style="left:393.5px;top:561.615px;overflow:visible;" width="36" height="4" viewBox="0 0 36 4"><polyline points="0.0,3.4 2.5,0.4 5.0,3.4 7.5,0.4 10.0,3.4 12.5,0.4 15.0,3.4 17.5,0.4 20.0,3.4 22.5,0.4 25.0,3.4 27.5,0.4 30.0,3.4 32.5,0.4 35.0,3.4" fill="none" stroke="#5d9a7a" stroke-width="1"/></svg>
<svg class="r" style="left:78.5px;top:582.858px;overflow:visible;" width="36" height="4" viewBox="0 0 36 4"><polyline points="0.0,3.4 2.5,0.4 5.0,3.4 7.5,0.4 10.0,3.4 12.5,0.4 15.0,3.4 17.5,0.4 20.0,3.4 22.5,0.4 25.0,3.4 27.5,0.4 30.0,3.4 32.5,0.4 35.0,3.4" fill="none" stroke="#5d9a7a" stroke-width="1"/></svg>
<svg class="r" style="left:78.5px;top:604.101px;overflow:visible;" width="36" height="4" viewBox="0 0 36 4"><polyline points="0.0,3.4 2.5,0.4 5.0,3.4 7.5,0.4 10.0,3.4 12.5,0.4 15.0,3.4 17.5,0.4 20.0,3.4 22.5,0.4 25.0,3.4 27.5,0.4 30.0,3.4 32.5,0.4 35.0,3.4" fill="none" stroke="#5d9a7a" stroke-width="1"/></svg>
<svg class="r" style="left:78.5px;top:667.83px;overflow:visible;" width="36" height="4" viewBox="0 0 36 4"><polyline points="0.0,3.4 2.5,0.4 5.0,3.4 7.5,0.4 10.0,3.4 12.5,0.4 15.0,3.4 17.5,0.4 20.0,3.4 22.5,0.4 25.0,3.4 27.5,0.4 30.0,3.4 32.5,0.4 35.0,3.4" fill="none" stroke="#5d9a7a" stroke-width="1"/></svg>
<svg class="r" style="left:78.5px;top:689.073px;overflow:visible;" width="36" height="4" viewBox="0 0 36 4"><polyline points="0.0,3.4 2.5,0.4 5.0,3.4 7.5,0.4 10.0,3.4 12.5,0.4 15.0,3.4 17.5,0.4 20.0,3.4 22.5,0.4 25.0,3.4 27.5,0.4 30.0,3.4 32.5,0.4 35.0,3.4" fill="none" stroke="#5d9a7a" stroke-width="1"/></svg>
<svg class="r" style="left:348.5px;top:689.073px;overflow:visible;" width="36" height="4" viewBox="0 0 36 4"><polyline points="0.0,3.4 2.5,0.4 5.0,3.4 7.5,0.4 10.0,3.4 12.5,0.4 15.0,3.4 17.5,0.4 20.0,3.4 22.5,0.4 25.0,3.4 27.5,0.4 30.0,3.4 32.5,0.4 35.0,3.4" fill="none" stroke="#5d9a7a" stroke-width="1"/></svg>
<svg class="r" style="left:78.5px;top:710.316px;overflow:visible;" width="36" height="4" viewBox="0 0 36 4"><polyline points="0.0,3.4 2.5,0.4 5.0,3.4 7.5,0.4 10.0,3.4 12.5,0.4 15.0,3.4 17.5,0.4 20.0,3.4 22.5,0.4 25.0,3.4 27.5,0.4 30.0,3.4 32.5,0.4 35.0,3.4" fill="none" stroke="#5d9a7a" stroke-width="1"/></svg>
<svg class="r" style="left:78.5px;top:731.559px;overflow:visible;" width="36" height="4" viewBox="0 0 36 4"><polyline points="0.0,3.4 2.5,0.4 5.0,3.4 7.5,0.4 10.0,3.4 12.5,0.4 15.0,3.4 17.5,0.4 20.0,3.4 22.5,0.4 25.0,3.4 27.5,0.4 30.0,3.4 32.5,0.4 35.0,3.4" fill="none" stroke="#5d9a7a" stroke-width="1"/></svg>
<svg class="r" style="left:78.5px;top:774.045px;overflow:visible;" width="36" height="4" viewBox="0 0 36 4"><polyline points="0.0,3.4 2.5,0.4 5.0,3.4 7.5,0.4 10.0,3.4 12.5,0.4 15.0,3.4 17.5,0.4 20.0,3.4 22.5,0.4 25.0,3.4 27.5,0.4 30.0,3.4 32.5,0.4 35.0,3.4" fill="none" stroke="#5d9a7a" stroke-width="1"/></svg>
<svg class="r" style="left:78.5px;top:816.531px;overflow:visible;" width="36" height="4" viewBox="0 0 36 4"><polyline points="0.0,3.4 2.5,0.4 5.0,3.4 7.5,0.4 10.0,3.4 12.5,0.4 15.0,3.4 17.5,0.4 20.0,3.4 22.5,0.4 25.0,3.4 27.5,0.4 30.0,3.4 32.5,0.4 35.0,3.4" fill="none" stroke="#5d9a7a" stroke-width="1"/></svg>
</div>
<div class="r" style="left:623px;top:505.8px;width:1.6px;height:15px;background:#e8e8e8;"></div>
<div class="r" style="left:0px;top:909px;width:1880px;height:1.2px;background:#484a4c;"></div>
<div class="r" style="left:0px;top:910px;width:1880px;height:28px;background:#3d3f41;"></div>
<div class="r" style="left:0px;top:937px;width:1880px;height:1px;background:#46484a;"></div>
<div class="r" style="left:0px;top:938px;width:1880px;height:1px;background:#393b3d;"></div>
<div class="r" style="left:0px;top:938.5px;width:1880px;height:25.5px;background:#3d3f41;"></div>
<div class="r" style="left:33px;top:919.4px;width:2.6px;height:2.6px;background:#afb1b3;"></div>
<div class="r" style="left:37.2px;top:919.4px;width:9.2px;height:2.6px;background:#afb1b3;"></div>
<div class="r" style="left:33px;top:923.6px;width:2.6px;height:2.6px;background:#afb1b3;"></div>
<div class="r" style="left:37.2px;top:923.6px;width:9.2px;height:2.6px;background:#afb1b3;"></div>
<div class="r" style="left:33px;top:927.8px;width:2.6px;height:2.6px;background:#afb1b3;"></div>
<div class="r" style="left:37.2px;top:927.8px;width:9.2px;height:2.6px;background:#afb1b3;"></div>
<span id="t95" class="t" style="left:52.30px;top:919.67px;font:normal 13.5px/13.5px 'Liberation Sans','Noto Sans CJK SC',sans-serif;color:#bbbbbb;letter-spacing:0.288px;transform:scaleY(0.930);transform-origin:0 11.43px;"><u style="text-underline-offset:1.5px">6</u>: TODO</span>
<svg class="r" style="left:136px;top:917.5px;" width="14" height="13.2" viewBox="0 0 14 13.2"><rect width="14" height="13.2" rx="1" fill="#afb1b3"/><path d="M2.5,3 L6,6 L2.5,9" fill="none" stroke="#3d3f41" stroke-width="1.5"/><rect x="6.8" y="9" width="5" height="1.5" fill="#3d3f41"/></svg>
<span id="t96" class="t" style="left:157.20px;top:919.67px;font:normal 13.5px/13.5px 'Liberation Sans','Noto Sans CJK SC',sans-serif;color:#bbbbbb;letter-spacing:0.743px;transform:scaleY(0.930);transform-origin:0 11.43px;">Terminal</span>
<svg class="r" style="left:1781.5px;top:917px;" width="18" height="17" viewBox="0 0 18 17"><path d="M8.5,1.3 C12.8,1.3 15.8,4.4 15.8,8.2 L15.8,15 L8.5,15 C4.400,15 1.300,12 1.300,8.200 C1.300,4.400 4.400,1.300 8.500,1.300 Z" fill="none" stroke="#afb1b3" stroke-width="2"/></svg>
<span id="t97" class="t" style="left:1804.00px;top:920.27px;font:normal 13.5px/13.5px 'Liberation Sans','Noto Sans CJK SC',sans-serif;color:#bbbbbb;letter-spacing:0.436px;transform:scaleY(0.930);transform-origin:0 11.43px;">Event Log</span>
<svg class="r" style="left:3px;top:944.5px;" width="16.5" height="15.5" viewBox="0 0 16.5 15.5"><rect x="3.6" y="0.9" width="11.8" height="11" fill="none" stroke="#a2a5a7" stroke-width="1.8"/><path d="M0.8,3.8 V14.500 H12.600" fill="none" stroke="#a2a5a7" stroke-width="1.6"/></svg>
<svg class="r" style="left:1187.5px;top:942px;" width="18" height="18" viewBox="0 0 18 18"><path d="M12.60,9.00 L17.00,9.00" stroke="#c8c8c8" stroke-opacity="0.18" stroke-width="1.6" stroke-linecap="round"/><path d="M11.55,11.55 L14.66,14.66" stroke="#c8c8c8" stroke-opacity="0.24" stroke-width="1.6" stroke-linecap="round"/><path d="M9.00,12.60 L9.00,17.00" stroke="#c8c8c8" stroke-opacity="0.30" stroke-width="1.6" stroke-linecap="round"/><path d="M6.45,11.55 L3.34,14.66" stroke="#c8c8c8" stroke-opacity="0.36" stroke-width="1.6" stroke-linecap="round"/><path d="M5.40,9.00 L1.00,9.00" stroke="#c8c8c8" stroke-opacity="0.42" stroke-width="1.6" stroke-linecap="round"/><path d="M6.45,6.45 L3.34,3.34" stroke="#c8c8c8" stroke-opacity="0.48" stroke-width="1.6" stroke-linecap="round"/><path d="M9.00,5.40 L9.00,1.00" stroke="#c8c8c8" stroke-opacity="0.54" stroke-width="1.6" stroke-linecap="round"/><path d="M11.55,6.45 L14.66,3.34" stroke="#c8c8c8" stroke-opacity="0.60" stroke-width="1.6" stroke-linecap="round"/></svg>
<span id="t98" class="t" style="left:1209.80px;top:944.26px;font:normal 16px/16px 'Liberation Sans','Noto Sans CJK SC',sans-serif;color:#5394ec;letter-spacing:0.036px;transform:scaleY(0.930);transform-origin:0 13.54px;">2 processes running...</span>
<span id="t99" class="t" style="left:1405.00px;top:944.26px;font:normal 16px/16px 'Liberation Sans','Noto Sans CJK SC',sans-serif;color:#bbbbbb;letter-spacing:-0.080px;transform:scaleY(0.930);transform-origin:0 13.54px;">163 chars, 3 line breaks</span>
<span id="t100" class="t" style="left:1593.50px;top:944.26px;font:normal 16px/16px 'Liberation Sans','Noto Sans CJK SC',sans-serif;color:#bbbbbb;letter-spacing:-0.558px;transform:scaleY(0.930);transform-origin:0 13.54px;">33:1</span>
<span id="t101" class="t" style="left:1641.80px;top:944.26px;font:normal 16px/16px 'Liberation Sans','Noto Sans CJK SC',sans-serif;color:#bbbbbb;letter-spacing:-1.309px;transform:scaleY(0.930);transform-origin:0 13.54px;">CRLF</span>
<svg class="r" style="left:1684px;top:946.8px;" width="6" height="10.4" viewBox="0 0 6 10.4"><path d="M0,4 L3,0.400 L6,4 Z M0,6.400 L3,10 L6,6.400 Z" fill="#afb1b3"/></svg>
<span id="t102" class="t" style="left:1707.00px;top:944.26px;font:normal 16px/16px 'Liberation Sans','Noto Sans CJK SC',sans-serif;color:#858789;letter-spacing:-0.565px;transform:scaleY(0.930);transform-origin:0 13.54px;">UTF-8</span>
<span id="t103" class="t" style="left:1764.00px;top:944.26px;font:normal 16px/16px 'Liberation Sans','Noto Sans CJK SC',sans-serif;color:#bbbbbb;letter-spacing:-0.326px;transform:scaleY(0.930);transform-origin:0 13.54px;">4 spaces</span>
<svg class="r" style="left:1833.5px;top:946.8px;" width="6" height="10.4" viewBox="0 0 6 10.4"><path d="M0,4 L3,0.400 L6,4 Z M0,6.400 L3,10 L6,6.400 Z" fill="#afb1b3"/></svg>
<div class="r" style="left:1849px;top:936.5px;width:31px;height:27.5px;background:#ffffff;"></div>
<div class="r" style="left:1854px;top:938.8px;width:2px;height:2px;background:#c9cbd3;"></div>
<div class="r" style="left:1854px;top:944px;width:2px;height:2px;background:#c9cbd3;"></div>
<div class="r" style="left:1854px;top:949.2px;width:2px;height:2px;background:#c9cbd3;"></div>
<div class="r" style="left:1854px;top:954.4px;width:2px;height:2px;background:#c9cbd3;"></div>
<div class="r" style="left:1854px;top:959.6px;width:2px;height:2px;background:#c9cbd3;"></div>
<svg class="r" style="left:1862px;top:940px;" width="18" height="23" viewBox="0 0 18 23"><g transform="rotate(-12 10 12)"><rect x="1.500" y="3" width="30" height="17.500" rx="3" fill="#f0601f"/><text x="4.500" y="19.500" font-family="Liberation Sans,sans-serif" font-weight="bold" font-size="20" fill="#fff" transform="scale(1.150,1)">S</text></g></svg>
<div class="r" style="left:0px;top:964px;width:1880px;height:44px;background:#cbe6ee;"></div>
<div class="r" style="left:0;top:964px;width:1880px;height:44px;background:linear-gradient(90deg,#c4e3ec 0%,#cde8ef 35%,#d0e9f0 60%,#cbe6ee 100%)"></div>
<svg class="r" style="left:16px;top:978px;" width="30" height="26" viewBox="0 0 30 26"><path d="M14,1.5 C17,5 16,11 9.5,13.5 C5.5,14.5 2.5,13 1,11.5 C4,12 9,11 11.5,7.5 C13,5 13.5,3 14,1.5 Z" fill="#f2b01e"/><ellipse cx="12" cy="20.5" rx="8.5" ry="4.2" fill="#eef3f8"/><ellipse cx="18.5" cy="17.5" rx="6.5" ry="5" fill="#e3eaf2"/><ellipse cx="22" cy="21" rx="6" ry="3.6" fill="#f5f8fb"/></svg>
<span id="t104" class="t" style="left:56.60px;top:976.88px;font:normal 15.5px/15.5px 'Liberation Sans','Noto Sans CJK SC',sans-serif;color:#1c2a33;letter-spacing:-1.097px;transform:scaleY(0.930);transform-origin:0 13.12px;">29°C</span>
<span id="t105" class="t" style="left:57.00px;top:998.43px;font:normal 14.5px/14.5px 'Liberation Sans','Noto Sans CJK SC',sans-serif;color:#26343d;letter-spacing:0.657px;transform:scaleY(0.930);transform-origin:0 12.27px;">多云</span>
<div class="r" style="left:607px;top:980px;width:29.2px;height:28px;background:linear-gradient(135deg,#5ccbfa 0%,#25a4ee 45%,#0f7fd6 100%)"></div>
<div class="r" style="left:621px;top:980px;width:1.4px;height:28px;background:#cbe6ee;"></div>
<div class="r" style="left:607px;top:994.3px;width:29.2px;height:1.4px;background:#cbe6ee;"></div>
<svg class="r" style="left:661.5px;top:978.3px;" width="30" height="32" viewBox="0 0 30 32"><circle cx="17" cy="13" r="9.6" fill="none" stroke="#1b1b1b" stroke-width="3.3"/><path d="M10,21 L2.5,30" stroke="#1b1b1b" stroke-width="4.4" stroke-linecap="round"/></svg>
<div class="r" style="left:725px;top:980.2px;width:21.5px;height:19.5px;background:#f4f4f4;border-radius:2px;box-shadow:0 0 0 .5px #c9c9c9"></div>
<div class="r" style="left:717px;top:988.3px;width:22.5px;height:23px;background:#2b2b2b;border-radius:2px"></div>
<div class="r" style="left:725px;top:988.3px;width:14.5px;height:11.4px;background:#9a9a9a;opacity:.8"></div>
<svg class="r" style="left:772px;top:978px;" width="32" height="32" viewBox="0 0 32 32"><defs><linearGradient id="rd" x1="0" y1="0" x2="1" y2="1"><stop offset="0" stop-color="#0a1aa8"/><stop offset=".6" stop-color="#3f6fe0"/><stop offset="1" stop-color="#a9c8f5"/></linearGradient></defs><path d="M3,2 L27,6 L24,21 L6,18 Z" fill="#8f9cc0"/><path d="M4.500,3.500 L25.500,7 L23,19.500 L7,17 Z" fill="url(#rd)"/><path d="M10,19 L15,19.800 L14.500,24 L8,25 Z" fill="#b9c3cf"/><circle cx="21.5" cy="25" r="7.2" fill="#9aa3a8"/><circle cx="21.5" cy="25" r="6" fill="#c9d0d4"/><path d="M17.5,25 l3,-2.5 v5 Z M25.5,25 l-3,-2.5 v5 Z" fill="#2c8a3c"/></svg>
<svg class="r" style="left:826px;top:977.7px;" width="32" height="31" viewBox="0 0 33 32"><defs><linearGradient id="eg" x1="0" y1="0" x2="1" y2="1"><stop offset="0" stop-color="#35c1f1"/><stop offset=".55" stop-color="#1f8fe0"/><stop offset="1" stop-color="#0c59a4"/></linearGradient><linearGradient id="eg2" x1="0" y1="0" x2="1" y2="0"><stop offset="0" stop-color="#2cc3d3"/><stop offset="1" stop-color="#6bdc4b"/></linearGradient></defs><circle cx="16.5" cy="17" r="15.5" fill="url(#eg)"/><path d="M1.2,15 C2,6 9,1.5 16.5,1.5 C25,1.5 32,7.5 32,15.5 C32,20 28.5,23 25,23 C21.5,23 20.5,21 21.5,19 C22.5,16.5 21,12.5 16.5,12.5 C9,12.500 4,17 4.5,24.500 C2,21.500 1,18.500 1.2,15 Z" fill="url(#eg2)" opacity=".9"/><path d="M11,19 C11,26 17,31 24,30 C20,33 12,33 7.500,28 C4.500,24 5.500,17 10,14.500 C10.800,15.500 11,17 11,19 Z" fill="#0b4f9c"/><circle cx="17" cy="19.500" r="4.600" fill="#cbe6ee"/></svg>
<svg class="r" style="left:881px;top:977.2px;" width="32" height="32" viewBox="0 0 32 32"><circle cx="16" cy="17" r="14" fill="none" stroke="#35b558" stroke-width="3"/><path d="M3,22 A14 14 0 0 1 12,3.500" fill="none" stroke="#f0b418" stroke-width="3"/><path d="M20,3.500 A14 14 0 0 1 30,17" fill="none" stroke="#e4472e" stroke-width="3"/><path d="M28,24 A14 14 0 0 1 8,28.500" fill="none" stroke="#7a57d0" stroke-width="3"/><path d="M7.500,18.800 H24.500 C24.800,13 21,9.500 16,9.500 C11,9.500 7.500,13 7.500,17.500 C7.500,22.500 11,26 16.500,26 C20,26 22.500,24.500 24,22.300 L20.800,20.800 C19.800,22 18.500,22.800 16.500,22.800 C13.800,22.800 12,21.200 11.700,18.800 Z M11.800,15.800 C12.300,13.800 13.800,12.600 16,12.600 C18.200,12.600 19.800,13.800 20.300,15.800 Z" fill="#1da0e8"/></svg>
<svg class="r" style="left:937.3px;top:979.3px;" width="28.5" height="28.5" viewBox="0 0 29 29"><circle cx="14.500" cy="14.500" r="14" fill="#e33b2e"/><path d="M14.500,14.500 L2.400,7.500 A14 14 0 0 0 10.500,28 Z" fill="#2da94f"/><path d="M14.500,14.500 L10.500,28 A14 14 0 0 0 28.400,12 L16,12 Z" fill="#fcc31e"/><path d="M2.400,7.500 A14 14 0 0 1 28,10.500 L14.500,10.500 Z" fill="#e33b2e"/><circle cx="14.500" cy="14.500" r="6.500" fill="#f4f4f4"/><circle cx="14.500" cy="14.500" r="5.200" fill="#3f83ec"/></svg>
<svg class="r" style="left:991px;top:979.7px;" width="32" height="30" viewBox="0 0 32 30"><path d="M1,3 C1,2 1.800,1.200 2.800,1.200 H11 L14,4.500 H29 C30.200,4.500 31,5.300 31,6.500 V9 H1 Z" fill="#e8a514"/><rect x="1" y="7" width="30" height="23" rx="1.500" fill="#fbc932"/><rect x="1" y="17" width="30" height="13" fill="#f4b81f"/><rect x="6" y="20" width="20" height="10" rx="1.200" fill="#1a86d9"/><rect x="9.500" y="23" width="13" height="2.600" rx="1" fill="#0c5fa8"/></svg>
<svg class="r" style="left:1048px;top:982.5px;" width="28" height="22" viewBox="0 0 28 22"><rect x="0.500" y="0.500" width="27" height="21" rx="1.500" fill="#f4f0ee" stroke="#e2dcd8" stroke-width="1"/><circle cx="10" cy="13" r="4.800" fill="#e8703a"/><circle cx="10" cy="13" r="1.800" fill="#f8d9c6"/><rect x="18.500" y="6" width="4.500" height="13" fill="#ef8a4c"/><circle cx="14" cy="6" r="1.500" fill="#f0a070"/></svg>
<svg class="r" style="left:1102.3px;top:979.5px;" width="29" height="29" viewBox="0 0 31 30"><rect x="0.500" y="0.500" width="30" height="29" rx="3" fill="#2f9ae6"/><path d="M0.500,29.500 V22 L10.500,11 L19,21 L23,17 L30.500,25 V26.500 C30.500,28.200 29.200,29.500 27.500,29.500 Z" fill="#12407f"/><path d="M0.500,26 L10.500,14.500 L22,29.500 H3.500 C1.800,29.500 0.500,28.200 0.500,26.500 Z" fill="#1b57a6"/><circle cx="22.500" cy="8" r="2.800" fill="#eef5fd"/></svg>
<svg class="r" style="left:1155px;top:977.5px;" width="33" height="30" viewBox="0 0 33 30"><ellipse cx="10" cy="17" rx="9.500" ry="7" fill="#f1c84a" transform="rotate(-25 10 17)"/><ellipse cx="22" cy="12" rx="10" ry="7" fill="#f4cf58" transform="rotate(-30 22 12)"/><ellipse cx="19" cy="22" rx="9" ry="6" fill="#edc040" transform="rotate(15 19 22)"/><ellipse cx="12" cy="8" rx="6.500" ry="4.500" fill="#f6d668" transform="rotate(-20 12 8)"/></svg>
<svg class="r" style="left:1216px;top:978.5px;" width="23" height="31" viewBox="0 0 23 31"><rect x="0.500" y="3" width="22" height="28" rx="1.500" fill="#3aa6dc"/><rect x="0.500" y="27.500" width="22" height="3.500" fill="#7d4a2c"/><g stroke="#1b5f86" stroke-width="1.600"><path d="M3.500,1 V6 M7.500,1 V6 M11.500,1 V6 M15.500,1 V6 M19.500,1 V6"/></g><g stroke="#12486a" stroke-width="1.700"><path d="M4,11 H19 M4,15 H19 M4,19 H19 M4,23 H19"/></g></svg>
<div class="r" style="left:1258px;top:969.7px;width:48px;height:40px;background:#deeef4;border-radius:5px 5px 0 0;box-shadow:0 0 0 .6px #c3dbe3"></div>
<svg class="r" style="left:1265px;top:978.7px;" width="33" height="31" viewBox="0 0 33 31"><path d="M2,6 L12,1 L16,12 L6,17 Z" fill="#f0513c"/><path d="M12,1 L26,4 L31,15 L22,12 Z" fill="#f77d2a"/><path d="M18,10 L31,15 L24,31 L12,26 Z" fill="#3a6fe0"/><path d="M2,6 L8,28 L20,31 L14,14 Z" fill="#d6347c"/><path d="M20,20 L31,15 L26,30 Z" fill="#1ea5e0"/><rect x="6.500" y="6.500" width="19.500" height="19.500" fill="#151515"/><text x="9.200" y="16.800" font-family="Liberation Sans,sans-serif" font-weight="bold" font-size="9.500" fill="#fff">IJ</text><rect x="9" y="21.500" width="7.500" height="1.700" fill="#fff"/></svg>
<svg class="r" style="left:1579px;top:988.5px;" width="18" height="11" viewBox="0 0 18 11"><path d="M1.200,9.800 L9,1.800 L16.800,9.800" fill="none" stroke="#1b1b1b" stroke-width="1.700"/></svg>
<div class="r" style="left:1608px;top:982px;width:20px;height:24px;background:#f0f7fc;border-radius:3px"></div>
<svg class="r" style="left:1610px;top:987.5px;" width="16" height="14" viewBox="0 0 16 14"><circle cx="8" cy="4.200" r="3" fill="none" stroke="#56aef2" stroke-width="1.800"/><circle cx="4" cy="9.800" r="3" fill="none" stroke="#56aef2" stroke-width="1.800"/><circle cx="12" cy="9.800" r="3" fill="none" stroke="#3f97ee" stroke-width="1.800"/><circle cx="8" cy="5.800" r="1.500" fill="#ee5a7c"/></svg>
<div class="r" style="left:1614.5px;top:1003.8px;width:7px;height:1.6px;background:#e8506e;border-radius:1px"></div>
<svg class="r" style="left:1645px;top:984px;" width="16" height="21" viewBox="0 0 16 21"><rect x="4.500" y="0.900" width="7" height="11.500" rx="3.500" fill="none" stroke="#1b1b1b" stroke-width="1.400"/><path d="M1.300,9.500 C1.300,13.800 4.300,15.800 8,15.800 C11.700,15.800 14.700,13.800 14.700,9.500 M8,15.800 V19.800" fill="none" stroke="#1b1b1b" stroke-width="1.400"/></svg>
<svg class="r" style="left:1682px;top:985px;" width="22" height="16" viewBox="0 0 22 16"><path d="M1,6 C6.500,0.300 15.500,0.300 21,6" fill="none" stroke="#1b1b1b" stroke-width="1.500"/><path d="M4.300,9.300 C8,5.500 14,5.500 17.700,9.300" fill="none" stroke="#1b1b1b" stroke-width="1.500"/><path d="M7.600,12.300 C9.500,10.400 12.500,10.400 14.400,12.300" fill="none" stroke="#1b1b1b" stroke-width="1.500"/><circle cx="11" cy="14.300" r="1.400" fill="#1b1b1b"/></svg>
<svg class="r" style="left:1712px;top:984px;" width="22" height="20" viewBox="0 0 22 20"><path d="M1,7 H5 L10,2.500 V17.500 L5,13 H1 Z" fill="none" stroke="#1b1b1b" stroke-width="1.400" stroke-linejoin="round"/><path d="M13,6.500 C14.800,8.500 14.800,11.500 13,13.500 M16,4 C19,7.500 19,12.500 16,16 M19,1.800 C23,6.500 23,13.500 19,18.200" fill="none" stroke="#1b1b1b" stroke-width="1.300"/></svg>
<svg class="r" style="left:1741px;top:984.5px;" width="23" height="17" viewBox="0 0 23 17"><rect x="6.500" y="3.800" width="12.500" height="11" rx="2" fill="#1b1b1b"/><rect x="19" y="7" width="1.800" height="4.600" rx="0.800" fill="#1b1b1b"/><path d="M1.500,0.500 V4 M5,0.500 V4 M0.500,4.500 H6 V7 C6,9 4.500,9.500 3.300,9.500 V12 H7" fill="none" stroke="#1b1b1b" stroke-width="1.500"/></svg>
<span id="t106" class="t" style="left:1818.00px;top:975.68px;font:normal 15.5px/15.5px 'Liberation Sans','Noto Sans CJK SC',sans-serif;color:#1b1b1b;letter-spacing:-1.398px;transform:scaleY(0.930);transform-origin:0 13.12px;">22:17</span>
<span id="t107" class="t" style="left:1782.00px;top:996.08px;font:normal 15.5px/15.5px 'Liberation Sans','Noto Sans CJK SC',sans-serif;color:#1b1b1b;letter-spacing:-0.055px;transform:scaleY(0.930);transform-origin:0 13.12px;">2022/6/28</span>
<div class="r" style="left:1866px;top:986px;width:18.4px;height:18.4px;border-radius:10px;background:#3f8a8c"></div>
<span id="t108" class="t" style="left:1873.50px;top:989.15px;font:normal 14px/14px 'Liberation Sans','Noto Sans CJK SC',sans-serif;color:#ffffff;letter-spacing:0.000px;transform:scaleY(0.930);transform-origin:0 11.85px;">1</span>
<div class="r" style="left:1778px;top:456.500px;width:110px;height:31px;border-radius:5px;overflow:hidden;background:linear-gradient(180deg,#f4fbff 0%,#d4edfd 55%,#c2e6fd 100%);box-shadow:0 0 0 1px #8fcdf7"><div class="r" style="left:0;top:0;width:37.500px;height:31px;background:#2aa3f7"></div></div>
<svg class="r" style="left:1785px;top:460px;" width="24" height="23" viewBox="0 0 24 23"><circle cx="12" cy="7.500" r="4.600" fill="none" stroke="#fff" stroke-width="2.800"/><circle cx="6.500" cy="15" r="4.600" fill="none" stroke="#fff" stroke-width="2.800"/><circle cx="17.500" cy="15" r="4.600" fill="none" stroke="#fff" stroke-width="2.800"/></svg>
<span id="t109" class="t" style="left:1832.00px;top:464.96px;font:normal 16px/16px 'Liberation Sans','Noto Sans CJK SC',sans-serif;color:#62b0ef;letter-spacing:0.000px;transform:scaleY(0.930);transform-origin:0 13.54px;">拖拽上传</span>
<div class="r" style="left:1645px;top:591.5px;width:232px;height:28.5px;background:#ffffff;box-shadow:0 0 0 .6px #d5d9e0"></div>
<svg class="r" style="left:1618px;top:584px;" width="44" height="40" viewBox="0 0 44 40"><g transform="rotate(-13 22 20)"><rect x="5" y="5.500" width="34" height="29" rx="4.500" fill="#f2601d"/><path d="M5,30 L39,30 V30.500 C39,33 37,34.500 35,34.500 H9 C7,34.500 5,33 5,30.500 Z" fill="#d9480f"/><text x="9.500" y="32.500" font-family="Liberation Sans,sans-serif" font-weight="bold" font-size="33" fill="#fff" transform="scale(1.160,0.920)" style="letter-spacing:0">S</text></g></svg>
<span id="t110" class="t" style="left:1663.50px;top:598.26px;font:bold 18px/18px 'Liberation Sans','Noto Sans CJK SC',sans-serif;color:#1f70c4;letter-spacing:0.000px;transform:scaleY(0.930);transform-origin:0 15.24px;">中</span>
<svg class="r" style="left:1692px;top:597px;" width="17" height="17" viewBox="0 0 17 17"><circle cx="3.500" cy="4.500" r="2" fill="none" stroke="#1f70c4" stroke-width="1.500"/><path d="M10,9 C12.500,9 13.500,11 12.500,13 C12,14.500 10.500,16 9,16.500 C10,15.500 10.500,14.500 10.500,13.300 C9,13.300 8,12.300 8,11 C8,9.800 9,9 10,9 Z" fill="#1f70c4"/></svg>
<svg class="r" style="left:1716px;top:596px;" width="20" height="20" viewBox="0 0 20 20"><circle cx="10" cy="10" r="8.500" fill="none" stroke="#1f70c4" stroke-width="1.900"/><rect x="6.300" y="5.500" width="1.900" height="4.500" rx="0.900" fill="#1f70c4"/><rect x="11.800" y="5.500" width="1.900" height="4.500" rx="0.900" fill="#1f70c4"/><path d="M5.200,11.500 C6.500,16 13.500,16 14.800,11.500" fill="none" stroke="#1f70c4" stroke-width="1.800"/></svg>
<svg class="r" style="left:1746px;top:595px;" width="16" height="23" viewBox="0 0 16 23"><rect x="4.500" y="0.500" width="7" height="13" rx="3.500" fill="#1f70c4"/><path d="M1.500,9.500 C1.500,14.500 4.500,16.500 8,16.500 C11.500,16.500 14.500,14.500 14.500,9.500 M8,16.500 V20.500 M4.500,21 H11.500" fill="none" stroke="#1f70c4" stroke-width="1.700"/></svg>
<svg class="r" style="left:1771px;top:599px;" width="20" height="14" viewBox="0 0 20 14"><rect x="0.800" y="0.800" width="18.400" height="12.400" rx="2" fill="#1f70c4"/><rect x="3.0" y="3.2" width="2" height="2" fill="#fff"/><rect x="6.2" y="3.2" width="2" height="2" fill="#fff"/><rect x="9.4" y="3.2" width="2" height="2" fill="#fff"/><rect x="12.6" y="3.2" width="2" height="2" fill="#fff"/><rect x="15.8" y="3.2" width="2" height="2" fill="#fff"/><rect x="3.0" y="6.4" width="2" height="2" fill="#fff"/><rect x="6.2" y="6.4" width="2" height="2" fill="#fff"/><rect x="9.4" y="6.4" width="2" height="2" fill="#fff"/><rect x="12.6" y="6.4" width="2" height="2" fill="#fff"/><rect x="15.8" y="6.4" width="2" height="2" fill="#fff"/><rect x="5" y="9.800" width="10" height="1.600" fill="#fff"/></svg>
<svg class="r" style="left:1800px;top:595px;" width="22" height="22" viewBox="0 0 22 22"><circle cx="8.500" cy="5.500" r="3.800" fill="#b4bac8"/><path d="M1.500,18 C1.500,12.500 4.500,10.500 8.500,10.500 C12.500,10.500 15.500,12.500 15.500,18 Z" fill="#b4bac8"/><rect x="8" y="13.500" width="13.500" height="7" fill="#fff"/><text x="8.500" y="20" font-family="Liberation Sans,sans-serif" font-weight="bold" font-size="7.500" fill="#c5cad6">20</text></svg>
<svg class="r" style="left:1825px;top:596px;" width="21" height="20" viewBox="0 0 21 20"><path d="M6.500,0.800 C8,3 13,3 14.500,0.800 L20.500,4.500 L18,9 L15.800,8 V19.500 H5.200 V8 L3,9 L0.500,4.500 Z" fill="#1f70c4"/></svg>
<div class="r" style="left:1853px;top:597px;width:8px;height:8px;background:#1f70c4;"></div>
<div class="r" style="left:1863.4px;top:597px;width:5.600px;height:5.600px;border:1.200px solid #1f70c4"></div>
<div class="r" style="left:1853px;top:607px;width:8px;height:8px;background:#1f70c4;"></div>
<div class="r" style="left:1863px;top:607px;width:8px;height:8px;background:#1f70c4;"></div>
<svg class="r" style="left:619.5px;top:510.5px;" width="14" height="21" viewBox="0 0 14 21"><path d="M1,1 L1,17 L4.800,13.500 L7.700,19.800 L10.200,18.600 L7.400,12.500 L12.500,12.300 Z" fill="#fff" stroke="#111" stroke-width="1.100" stroke-linejoin="round"/></svg>
</div></body></html>
